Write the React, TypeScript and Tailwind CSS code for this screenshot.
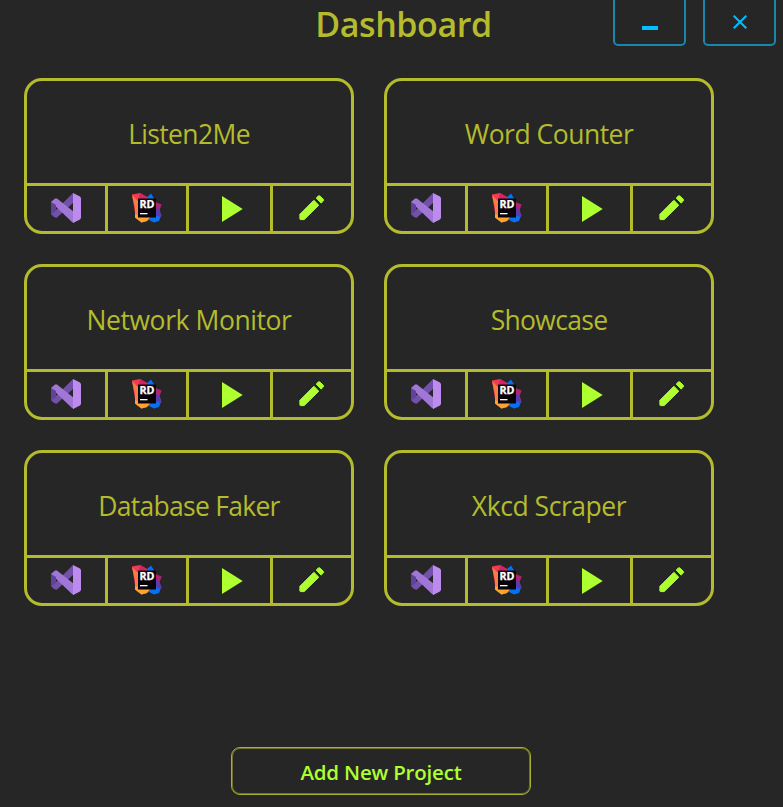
const FONT = "font-['Open_Sans','Noto_Sans',sans-serif]";

function VisualStudioIcon() {
  return (
    <svg width="30" height="30" viewBox="0 0 30 30" aria-label="Visual Studio">
      <path d="M0 9 L5 5.5 L9 9 L5 12 V18 L9 21 L5 25 L0 21 Z" fill="#60429b" />
      <path d="M3 19 L21 1 L22 0 V10 L6 24.5 L3 24 L0 21 Z" fill="#7350aa" />
      <path d="M0 9 L4 5.5 H6 L23 19 V30 L21 29 Z" fill="#a077d6" />
      <path d="M0 9 L5 12 V18 L0 21 Z" fill="#60429b" />
      <path d="M22 0 L29 3.5 L30 5 V25 L29 26.5 L22 30 Z" fill="#bd8bed" />
    </svg>
  );
}

function RiderIcon() {
  return (
    <svg width="30" height="30" viewBox="0 0 30 30" aria-label="Rider">
      <path d="M13 6 L19 .5 L23 7 L24 20 L29 23 L27 28 L22 29.5 L15 26 Z" fill="#0a6ff0" />
      <path d="M23 6 L24.5 9.5 L29.7 11.5 L27.5 17 L29.5 23 L23 23 Z" fill="#ab2672" />
      <path d="M24 15 L27.5 17 L29.5 23 L28 24 L24 22 Z" fill="#5b3cae" />
      <path d="M0 1.5 L8 0 L15 4 L14 20 L3 20 Z" fill="#f43a50" />
      <path d="M8 0 L15 4 L13 7 L7 5 Z" fill="#cf2467" />
      <path d="M0 2 L7 9 L7 22 L18 24 L15 28 L9.5 29.5 L3 24.5 L3 15 Z" fill="#fb7a46" />
      <path d="M3 21 L8 23 L18 24 L15 28 L9.5 29.5 L3 24.5 Z" fill="#fda32f" />
      <rect x="6" y="5.5" width="18" height="19" fill="#09040a" />
      <text x="7.4" y="15" fontSize="9.8" fontWeight="700" fill="#fff" stroke="#fff" strokeWidth=".25" textLength="15" lengthAdjust="spacingAndGlyphs">RD</text>
      <rect x="8" y="20" width="7.5" height="1.3" fill="#fff" />
    </svg>
  );
}

function PlayIcon() {
  return (
    <svg width="21" height="26" viewBox="0 0 21 26" aria-label="Run">
      <path d="M0 0 L20.7 13 L0 26 Z" fill="#adff2f" />
    </svg>
  );
}

function PencilIcon() {
  return (
    <svg width="26" height="26" viewBox="0 0 26 26" aria-label="Edit">
      <g fill="#adff2f" stroke="#adff2f" strokeWidth="1" strokeLinejoin="round">
        <path d="M.9 19.3 L14.9 5.3 L19.8 10.2 L5.2 24.6 H1.4 L.9 24.1 Z" />
        <path d="M17.2 3.1 L19.3 1 Q20.2 .3 21.2 1.2 L24.2 4.2 Q25 5.2 24.2 6.1 L22.1 8.1 Z" />
      </g>
    </svg>
  );
}

const projects = [
  { name: "Listen2Me", text: "tracking-[-0.65px]" },
  { name: "Word Counter", text: "tracking-[-0.5px]" },
  { name: "Network Monitor", text: "tracking-[-0.42px]" },
  { name: "Showcase", text: "tracking-[-0.68px]" },
  { name: "Database Faker", text: "tracking-[-0.73px]" },
  { name: "Xkcd Scraper", text: "tracking-[-0.45px]" },
];

function ProjectCard({ name, text }: { name: string; text: string }) {
  return (
    <div className="flex h-[156px] flex-col overflow-hidden rounded-[18px] border-[3px] border-[#b4bb2d]">
      <div className="flex h-[105px] items-center justify-center border-b-[3px] border-[#b4bb2d] pt-[3px]">
        <span className={`text-[26.5px] leading-9 whitespace-nowrap ${text}`}>{name}</span>
      </div>
      <div className="grid h-[45px] grid-cols-[81px_81px_84px_78px]">
        <button className="flex items-center justify-center border-r-[3px] border-[#b4bb2d] pb-px"><VisualStudioIcon /></button>
        <button className="flex items-center justify-center border-r-[3px] border-[#b4bb2d] pb-px"><RiderIcon /></button>
        <button className="flex items-center justify-center border-r-[3px] border-[#b4bb2d] pl-[5px]"><PlayIcon /></button>
        <button className="flex items-center justify-center pb-px"><PencilIcon /></button>
      </div>
    </div>
  );
}

export default function App() {
  return (
    <div className={`flex h-[807px] w-[783px] flex-col overflow-hidden bg-[#262626] text-[#b4bb2d] ${FONT}`}>
      <header className="grid h-[78px] grid-cols-[193px_420px_1fr] items-start">
        <span />
        <h1 className="pt-[2px] pl-px text-center text-[34px] leading-[44px] font-semibold tracking-[-0.4px]">Dashboard</h1>
        <div className="-mt-1 flex gap-[17px]">
          <button className="flex h-[50px] w-[73px] items-end justify-center rounded-[5px] border-2 border-[#1987ad] pb-[14px]">
            <span className="h-1 w-4 bg-[#00bfff]" />
          </button>
          <button className="flex h-[50px] w-[73px] items-center justify-center rounded-[5px] border-2 border-[#1987ad] pt-[2px]">
            <svg width="14" height="14" viewBox="0 0 14 14" aria-label="Close">
              <path d="M.7 .7 L13.3 13.3 M13.3 .7 L.7 13.3" stroke="#00bfff" strokeWidth="2" />
            </svg>
          </button>
        </div>
      </header>
      <main className="ml-6 grid grid-cols-[330px_330px] gap-[30px]">
        {projects.map((p) => <ProjectCard key={p.name} {...p} />)}
      </main>
      <footer className="mt-auto mb-3 ml-[231px]">
        <button className="h-12 w-[300px] rounded-[9px] border border-[#a9b02e] pt-[2px] text-[20.5px] font-semibold tracking-[-0.2px] text-[#adff2f] shadow-[inset_0_0_0_1px_#6d7129]">
          Add New Project
        </button>
      </footer>
    </div>
  );
}
